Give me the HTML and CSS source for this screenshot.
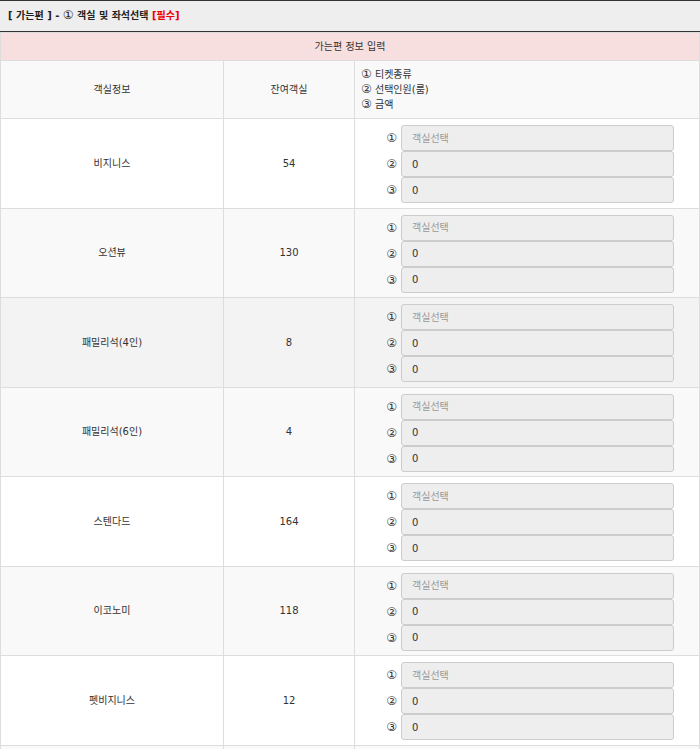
FILE: index.html
```html
<!DOCTYPE html>
<html lang="ko">
<head>
  <meta charset="UTF-8">
  <meta name="viewport" content="width=device-width, initial-scale=1.0">
  <title>가는편 객실 및 좌석선택</title>
  <link rel="stylesheet" href="styles.css">
</head>
<body>

  <div class="section-title">
    [ 가는편 ] - <span class="cn">①</span> 객실 및 좌석선택 <span class="required">[필수]</span>
  </div>

  <table class="room-table">
    <colgroup>
      <col class="col-name">
      <col class="col-remain">
      <col class="col-input">
    </colgroup>
    <tr class="caption-row">
      <td colspan="3">가는편 정보 입력</td>
    </tr>
    <tr class="head-row">
      <td>객실정보</td>
      <td>잔여객실</td>
      <td class="legend"><span class="cn">①</span> 티켓종류<br><span class="cn">②</span> 선택인원(룸)<br><span class="cn">③</span> 금액</td>
    </tr>

    <tr>
      <td>비지니스</td>
      <td>54</td>
      <td class="fields">
        <div class="field"><span class="num cn">①</span><input type="text" class="box" placeholder="객실선택" readonly></div>
        <div class="field"><span class="num cn">②</span><input type="text" class="box" value="0" readonly></div>
        <div class="field"><span class="num cn">③</span><input type="text" class="box" value="0" readonly></div>
      </td>
    </tr>
    <tr>
      <td>오션뷰</td>
      <td>130</td>
      <td class="fields">
        <div class="field"><span class="num cn">①</span><input type="text" class="box" placeholder="객실선택" readonly></div>
        <div class="field"><span class="num cn">②</span><input type="text" class="box" value="0" readonly></div>
        <div class="field"><span class="num cn">③</span><input type="text" class="box" value="0" readonly></div>
      </td>
    </tr>
    <tr class="hover">
      <td>패밀리석(4인)</td>
      <td>8</td>
      <td class="fields">
        <div class="field"><span class="num cn">①</span><input type="text" class="box" placeholder="객실선택" readonly></div>
        <div class="field"><span class="num cn">②</span><input type="text" class="box" value="0" readonly></div>
        <div class="field"><span class="num cn">③</span><input type="text" class="box" value="0" readonly></div>
      </td>
    </tr>
    <tr>
      <td>패밀리석(6인)</td>
      <td>4</td>
      <td class="fields">
        <div class="field"><span class="num cn">①</span><input type="text" class="box" placeholder="객실선택" readonly></div>
        <div class="field"><span class="num cn">②</span><input type="text" class="box" value="0" readonly></div>
        <div class="field"><span class="num cn">③</span><input type="text" class="box" value="0" readonly></div>
      </td>
    </tr>
    <tr>
      <td>스텐다드</td>
      <td>164</td>
      <td class="fields">
        <div class="field"><span class="num cn">①</span><input type="text" class="box" placeholder="객실선택" readonly></div>
        <div class="field"><span class="num cn">②</span><input type="text" class="box" value="0" readonly></div>
        <div class="field"><span class="num cn">③</span><input type="text" class="box" value="0" readonly></div>
      </td>
    </tr>
    <tr>
      <td>이코노미</td>
      <td>118</td>
      <td class="fields">
        <div class="field"><span class="num cn">①</span><input type="text" class="box" placeholder="객실선택" readonly></div>
        <div class="field"><span class="num cn">②</span><input type="text" class="box" value="0" readonly></div>
        <div class="field"><span class="num cn">③</span><input type="text" class="box" value="0" readonly></div>
      </td>
    </tr>
    <tr>
      <td>펫비지니스</td>
      <td>12</td>
      <td class="fields">
        <div class="field"><span class="num cn">①</span><input type="text" class="box" placeholder="객실선택" readonly></div>
        <div class="field"><span class="num cn">②</span><input type="text" class="box" value="0" readonly></div>
        <div class="field"><span class="num cn">③</span><input type="text" class="box" value="0" readonly></div>
      </td>
    </tr>
    <tr class="empty-row">
      <td></td>
      <td></td>
      <td></td>
    </tr>
  </table>

</body>
</html>
```

FILE: styles.css
```css
body {
  margin: 0;
  font-family: "DejaVu Sans", "Noto Sans CJK KR", sans-serif;
  font-size: 10px;
  color: #333;
  background: #fff;
}

.cn {
  font-size: 12px;
  line-height: 1;
  font-weight: normal;
}

.section-title {
  height: 30px;
  line-height: 30px;
  padding-left: 8px;
  background: #eee;
  border-top: 1px solid #333;
  border-bottom: 1px solid #333;
  font-weight: bold;
  color: #222;
}

.section-title .required {
  color: #e00;
}

.room-table {
  width: 100%;
  border-collapse: collapse;
  table-layout: fixed;
}

.col-name { width: 223px; }
.col-remain { width: 131px; }

.room-table td {
  border: 1px solid #ddd;
  padding: 6px;
  line-height: 15px;
  text-align: center;
  vertical-align: middle;
}

.room-table tr:nth-child(even) {
  background: #f9f9f9;
}

.room-table tr.hover {
  background: #f3f3f3;
}

.room-table tr.caption-row {
  background: #f8dfdf;
}

.room-table tr.empty-row td {
  height: 80px;
}

.room-table td.legend {
  text-align: left;
}

.room-table td.fields {
  padding: 6px 8px 4.5px;
}

.field {
  display: flex;
  align-items: center;
  margin-left: 22px;
}

.field .num {
  width: 12px;
  text-align: right;
  margin-right: 4px;
}

.box {
  box-sizing: border-box;
  width: 273px;
  height: 26px;
  margin: 0;
  padding: 0 10px;
  border: 1px solid #ccc;
  border-radius: 3px;
  background: #eee;
  font-family: "DejaVu Sans", "Noto Sans CJK KR", sans-serif;
  font-size: 10px;
  color: #333;
  outline: none;
}

.box::placeholder {
  color: #999;
}
```
